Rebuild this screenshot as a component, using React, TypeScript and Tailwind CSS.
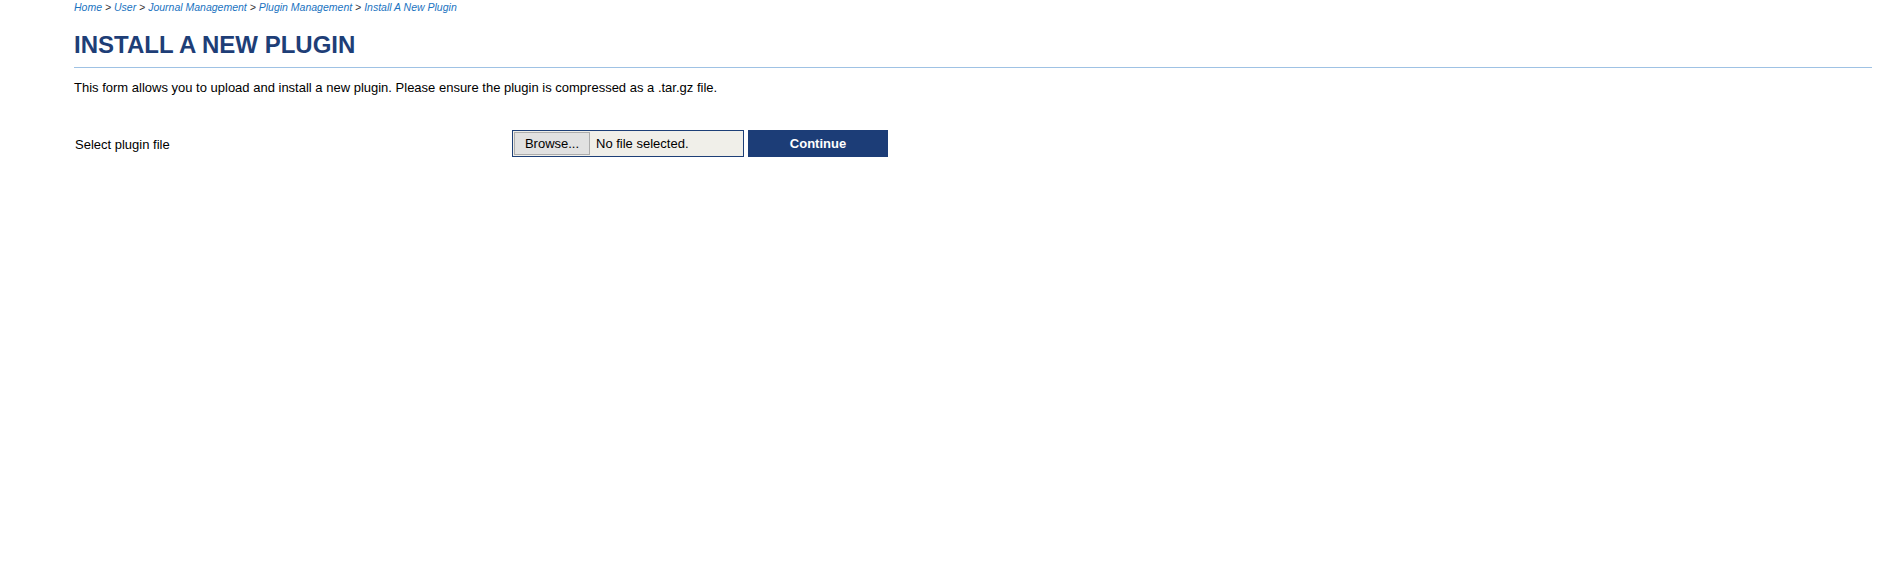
import React from "react";

export default function App() {
  return (
    <div className="min-h-[576px] w-full bg-white" style={{ fontFamily: '"Liberation Sans", Arial, sans-serif' }}>
      <div className="pl-[74px] pr-[14px]">
        <div className="pt-[2px] h-[14px] text-[10.5px] leading-[11px] italic text-[#1a73bf]">
          <span>Home</span>
          <span className="text-[#333]"> &gt; </span>
          <span>User</span>
          <span className="text-[#333]"> &gt; </span>
          <span>Journal Management</span>
          <span className="text-[#333]"> &gt; </span>
          <span>Plugin Management</span>
          <span className="text-[#333]"> &gt; </span>
          <span>Install A New Plugin</span>
        </div>
        <h1 className="mt-[17px] text-[24px] leading-[28px] font-bold text-[#1e3e77]">INSTALL A NEW PLUGIN</h1>
        <div className="mt-[8px] h-px bg-[#9fc2e4]" />
        <p className="mt-[12px] text-[13px] leading-[16px] text-black">
          This form allows you to upload and install a new plugin. Please ensure the plugin is compressed as a .tar.gz file.
        </p>
        <div className="mt-[34px] flex items-center">
          <div className="w-[438px] pl-px pt-[2px] text-[13px] text-black">Select plugin file</div>
          <div className="flex h-[27px] w-[232px] items-center border border-[#1d3f77] bg-[#f0efe9] p-px">
            <div className="flex h-full w-[76px] items-center justify-center border border-[#acacac] bg-[#e1e1e1] text-[13px] text-black">
              Browse...
            </div>
            <span className="ml-[6px] text-[13px] text-black">No file selected.</span>
          </div>
          <button className="ml-[4px] h-[27px] w-[140px] bg-[#1c3d77] text-[13px] font-bold text-white">Continue</button>
        </div>
      </div>
    </div>
  );
}
